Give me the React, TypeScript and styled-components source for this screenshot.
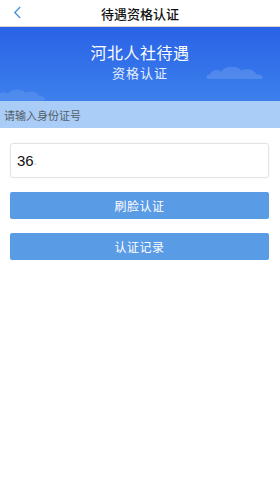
import React from 'react';
import styled, { createGlobalStyle } from 'styled-components';

const GlobalStyle = createGlobalStyle`
  html, body {
    margin: 0;
    padding: 0;
    background: #ffffff;
    font-family: "Noto Sans CJK SC", "Noto Sans", sans-serif;
  }
`;

function Cloud({ width, opacity }: { width: number; opacity: number }) {
  return (
    <svg width={width} height={width * 0.3} viewBox='0 0 100 30'>
      <path
        d='M8 26 C2 26 2 18 10 18 C12 10 24 10 28 14 C34 4 54 4 60 12 C68 8 82 10 84 18 C96 18 98 26 90 26 Z'
        fill='#ffffff'
        opacity={opacity}
      />
    </svg>
  );
}

function App() {
  return (
    <Page>
      <GlobalStyle />
      <Header>
        <BackButton>
          <svg width='9' height='13' viewBox='0 0 10 14'>
            <path d='M8 1 L2 7 L8 13' fill='none' stroke='#4a90e2' strokeWidth='1.5' />
          </svg>
        </BackButton>
        <Title>待遇资格认证</Title>
      </Header>
      <Banner>
        <BannerTitle>河北人社待遇</BannerTitle>
        <BannerSub>资格认证</BannerSub>
        <CloudSpot className='left'>
          <Cloud width={56} opacity={0.1} />
        </CloudSpot>
        <CloudSpot className='right'>
          <Cloud width={62} opacity={0.14} />
        </CloudSpot>
      </Banner>
      <Hint>请输入身份证号</Hint>
      <Form>
        <InputBox>
          <span>36</span>
          <Blur>.</Blur>
        </InputBox>
        <ActionButton>刷脸认证</ActionButton>
        <ActionButton>认证记录</ActionButton>
      </Form>
    </Page>
  );
}

const Page = styled.div`
  width: 280px;
  min-height: 501px;
  background: #ffffff;
`;

const Header = styled.header`
  position: relative;
  height: 26px;
  display: flex;
  align-items: center;
  justify-content: center;
  border-bottom: 1px solid #d6d6d6;
  background: #ffffff;
`;

const BackButton = styled.div`
  position: absolute;
  left: 13px;
  top: 6px;
  display: flex;
`;

const Title = styled.div`
  font-size: 13px;
  font-weight: 500;
  color: #111111;
`;

const Banner = styled.section`
  position: relative;
  overflow: hidden;
  height: 74px;
  display: flex;
  flex-direction: column;
  align-items: center;
  padding-top: 15px;
  box-sizing: border-box;
  background: linear-gradient(180deg, #2a62e6 0%, #3677ea 70%, #3d80ec 100%);
`;

const BannerTitle = styled.div`
  font-size: 16px;
  line-height: 20px;
  font-weight: 400;
  color: #ffffff;
  letter-spacing: 0.5px;
`;

const BannerSub = styled.div`
  margin-top: 2px;
  font-size: 13px;
  line-height: 18px;
  color: #e6eeff;
  letter-spacing: 1px;
`;

const CloudSpot = styled.div`
  position: absolute;
  display: flex;

  &.left {
    left: -8px;
    bottom: -2px;
  }
  &.right {
    right: 14px;
    top: 36px;
  }
`;

const Hint = styled.div`
  height: 27px;
  display: flex;
  align-items: center;
  padding-left: 4px;
  background: #a9cdf6;
  font-size: 11px;
  color: #555d66;
`;

const Form = styled.div`
  display: flex;
  flex-direction: column;
  padding: 15px 11px 0 10px;
`;

const InputBox = styled.div`
  height: 33px;
  display: flex;
  align-items: center;
  padding-left: 6px;
  border: 1px solid #e3e3e3;
  border-radius: 3px;
  box-shadow: 0 0 2px rgba(0, 0, 0, 0.05);
  font-family: "Liberation Sans", Arial, sans-serif;
  font-size: 15px;
  color: #111111;
`;

const Blur = styled.span`
  color: #c8c8c8;
  font-size: 12px;
`;

const ActionButton = styled.button`
  height: 27px;
  margin-top: 14px;
  border: none;
  border-radius: 2px;
  background: #5a9be6;
  color: #ffffff;
  font-family: "Noto Sans CJK SC", sans-serif;
  font-size: 12px;
  letter-spacing: 0.5px;
  cursor: pointer;

  & + & {
    margin-top: 14px;
  }
`;

export default App;
